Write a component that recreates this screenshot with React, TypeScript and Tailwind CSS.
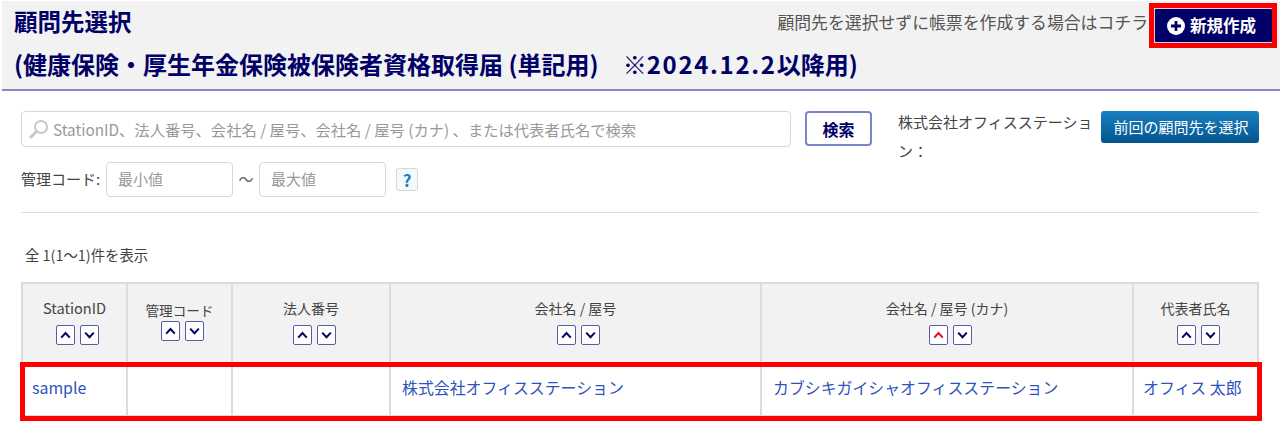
import React from "react";

const font = { fontFamily: '"Noto Sans CJK JP", sans-serif' };

function Arrow({ up, red }: { up?: boolean; red?: boolean }) {
  return (
    <span className="flex h-[20px] w-[19px] items-center justify-center rounded-[2px] border border-[#5a5aa8] bg-white">
      <svg width="11" height="8" viewBox="0 0 11 8" fill="none">
        <path
          d={up ? "M1.2 6.6 5.5 2l4.3 4.6" : "M1.2 1.6 5.5 6.2l4.3-4.6"}
          stroke={red ? "#e0102a" : "#000066"}
          strokeWidth="2"
        />
      </svg>
    </span>
  );
}

function Sort({ red }: { red?: boolean }) {
  return (
    <div className="flex justify-center gap-[5px] pl-[6px]">
      <Arrow up red={red} />
      <Arrow />
    </div>
  );
}

function Th({ label, w, red, tight, latin }: { label: string; w: string; red?: boolean; tight?: boolean; latin?: boolean }) {
  const text = tight
    ? "pt-[16px] text-[13.6px] leading-[20px]"
    : latin
      ? "pt-[14px] text-[14.6px] leading-[20px]"
      : "pt-[14px] text-[14px] leading-[20px]";
  return (
    <div className={`${w} border-r-2 border-[#dcdcdc] bg-[#f2f2f2] text-center`}>
      <div className={text}>{label}</div>
      <div className={tight ? "mt-[1px]" : "mt-[7px]"}>
        <Sort red={red} />
      </div>
    </div>
  );
}

function Td({ w, children, pl = "pl-[11px]" }: { w: string; children?: React.ReactNode; pl?: string }) {
  return (
    <div className={`${w} ${pl} flex items-center border-r-2 border-[#dcdcdc] pb-[4px] text-[15.9px] text-[#2f53bd]`}>{children}</div>
  );
}

export default function App() {
  return (
    <div className="relative h-[430px] w-[1280px] overflow-hidden bg-white text-[#444444]" style={font}>
      <header className="ml-[2px] mt-[1px] h-[90px] border-b-2 border-[#8a8abf] bg-[#f2f2f2]">
        <div className="flex h-[44px] items-start justify-between">
          <h1 className="pl-[12px] pt-[3px] text-[23.5px] font-bold leading-[34px] text-[#000066]">顧問先選択</h1>
          <div className="flex items-start">
            <span className="pt-[8px] text-[16.85px] leading-[26px] text-[#555555]">顧問先を選択せずに帳票を作成する場合はコチラ</span>
            <button className="ml-[6px] mr-[7px] mt-[7px] flex h-[35px] w-[119px] items-center justify-center gap-[5px] rounded-[2px] border border-[#d0d0e8] bg-[#000066] pr-[4px] text-[16.5px] font-bold text-white">
              <svg width="18" height="18" viewBox="0 0 17 17">
                <circle cx="8.5" cy="8.5" r="8.5" fill="#ffffff" />
                <path d="M8.5 3.8v9.4M3.8 8.5h9.4" stroke="#000066" strokeWidth="2.6" />
              </svg>
              新規作成
            </button>
          </div>
        </div>
        <h2 className="mt-[2px] whitespace-pre pl-[12px] text-[24px] font-bold leading-[34px] text-[#000066]">
          {"(健康保険・厚生年金保険被保険者資格取得届 (単記用)　※"}
          <span className="tracking-[1.7px]">2024.12.2</span>
          {"以降用)"}
        </h2>
      </header>

      <main className="ml-[21px] w-[1238px]">
        <div className="mt-[20px] flex items-start">
          <div className="w-[851px]">
            <div className="flex items-start">
              <div className="flex h-[36px] w-[770px] items-center rounded-[4px] border border-[#d8d8d8] pl-[7px]">
                <svg width="20" height="20" viewBox="0 0 20 20" fill="none">
                  <circle cx="12" cy="8" r="6" stroke="#c8c8c8" strokeWidth="2" />
                  <path d="M7.5 12.5 2 18" stroke="#c8c8c8" strokeWidth="3" strokeLinecap="round" />
                </svg>
                <span className="ml-[4px] text-[15.3px] text-[#999999]">StationID、法人番号、会社名 / 屋号、会社名 / 屋号 (カナ) 、または代表者氏名で検索</span>
              </div>
              <button className="ml-[14px] h-[35px] w-[67px] rounded-[4px] border-2 border-[#7a86c8] bg-white text-[16px] font-bold text-[#000066]">検索</button>
            </div>
            <div className="mt-[15px] flex items-center">
              <span className="w-[80px] whitespace-nowrap text-[15px] text-[#444444]">管理コード:</span>
              <div className="ml-[5px] flex h-[35px] w-[127px] items-center rounded-[4px] border border-[#d8d8d8] pl-[11px] text-[15px] text-[#999999]">最小値</div>
              <span className="w-[26px] text-center text-[15px] text-[#666666]">〜</span>
              <div className="flex h-[35px] w-[127px] items-center rounded-[4px] border border-[#d8d8d8] pl-[11px] text-[15px] text-[#999999]">最大値</div>
              <span className="ml-[10px] flex h-[23px] w-[22px] items-center justify-center rounded-[3px] border border-[#d8d8d8] bg-[#f4f9fc] text-[17px] font-bold text-[#1f7fc0]">?</span>
            </div>
          </div>
          <div className="-mt-[4px] ml-[26px] w-[198px] break-all text-[15px] leading-[29px] text-[#444444]">株式会社オフィスステーション：</div>
          <button className="ml-[6px] h-[32px] w-[159px] rounded-[3px] bg-gradient-to-b from-[#1a80c0] to-[#04558f] pl-[2px] text-[15px] text-white">前回の顧問先を選択</button>
        </div>

        <hr className="mt-[15px] border-t border-[#dddddd]" />

        <p className="ml-[4px] mt-[32px] text-[14.4px] leading-[20px] text-[#444444]">全 1(1〜1)件を表示</p>

        <div className="mt-[17px] border-l-2 border-t-2 border-[#dcdcdc]">
          <div className="flex h-[78px]">
            <Th label="StationID" w="w-[105px]" latin />
            <Th label="管理コード" w="w-[105px]" tight />
            <Th label="法人番号" w="w-[158px]" />
            <Th label="会社名 / 屋号" w="w-[371px]" />
            <Th label="会社名 / 屋号 (カナ)" w="w-[372px]" red />
            <Th label="代表者氏名" w="w-[125px]" />
          </div>
          <div className="flex h-[55px] border-y-2 border-[#dcdcdc]">
            <Td w="w-[105px]" pl="pl-[9px]">sample</Td>
            <Td w="w-[105px]" />
            <Td w="w-[158px]" />
            <Td w="w-[371px]">株式会社オフィスステーション</Td>
            <Td w="w-[372px]">カブシキガイシャオフィスステーション</Td>
            <Td w="w-[125px]" pl="pl-[9px]">オフィス 太郎</Td>
          </div>
        </div>
      </main>

      <div className="pointer-events-none absolute left-[1149px] top-[3px] h-[45px] w-[128px] border-[5px] border-[#ff0000]" />
      <div className="pointer-events-none absolute left-[20px] top-[362px] h-[59px] w-[1242px] border-[5px] border-[#ff0000]" />
    </div>
  );
}
